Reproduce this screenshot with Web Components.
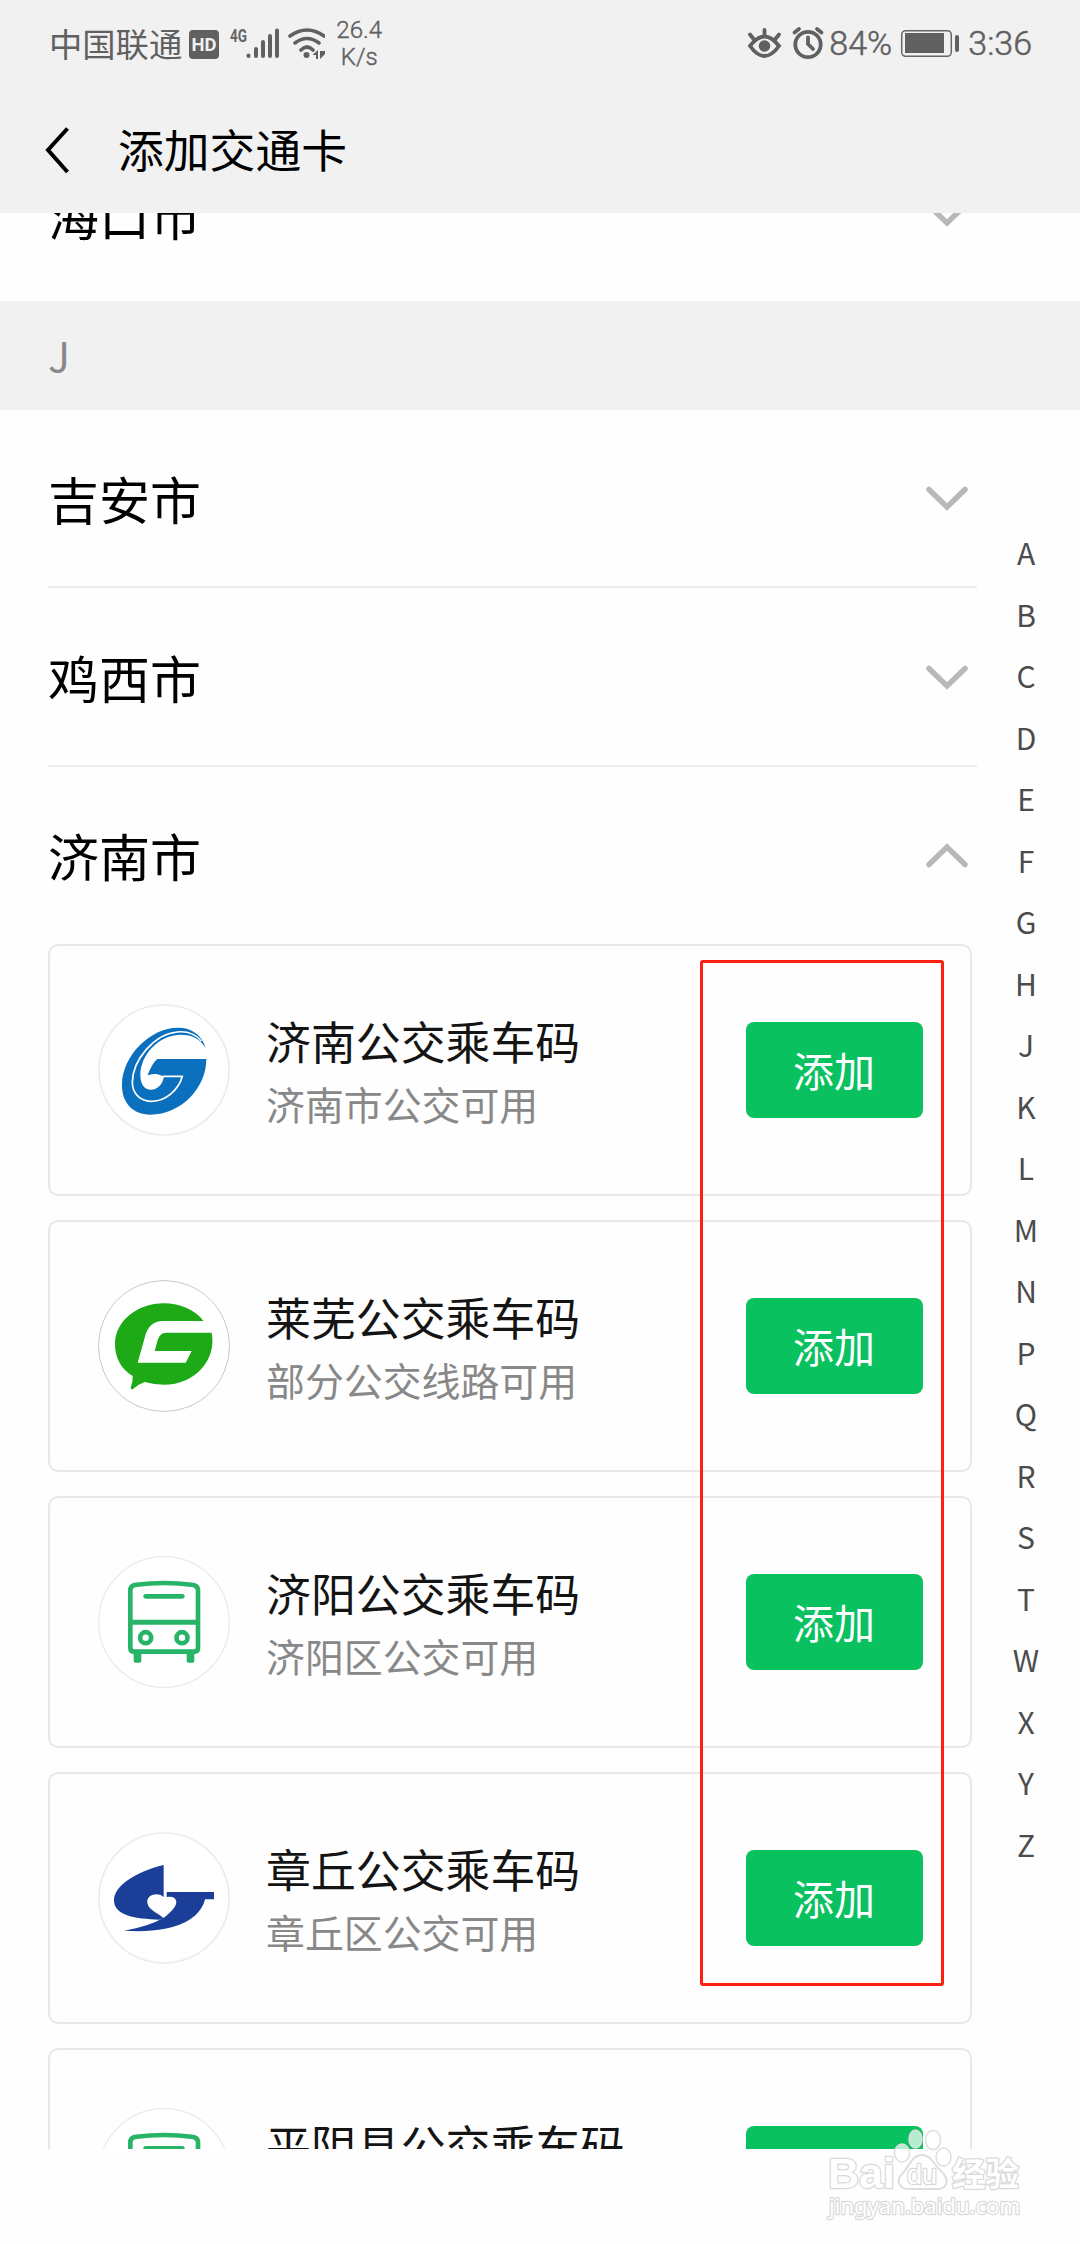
<!DOCTYPE html>
<html lang="zh-CN">
<head>
<meta charset="utf-8">
<title>添加交通卡</title>
<style>
html,body{margin:0;padding:0;background:#fefefe}
body{width:1080px;height:2244px;overflow:hidden;font-family:"Noto Sans CJK SC",sans-serif}
</style>
</head>
<body>
<transit-page></transit-page>
<script>
const define = (name, html) => customElements.define(name, class extends HTMLElement {
  connectedCallback() {
    if (this.shadowRoot) return;
    const t = document.createElement('template');
    t.innerHTML = typeof html === 'function' ? html(this) : html;
    this.attachShadow({mode: 'open'}).append(t.content.cloneNode(true));
  }
});

const BUS = `<svg viewBox="54 47 396 396"><circle cx="252" cy="245" r="196" fill="#fff" stroke="#ebebeb" stroke-width="4"/>
<g fill="none" stroke="#27b467" stroke-width="14"><path d="M151 322V150Q151 137 164 134Q252 122 340 134Q354 137 354 150V322Q354 334 342 334H163Q151 334 151 322Z"/><path d="M151 246H354" stroke-width="15"/><path d="M197 168H307" stroke-linecap="round"/><circle cx="197" cy="292" r="16.5"/><circle cx="306" cy="292" r="16.5"/></g>
<path fill="#27b467" d="M161 334H184V362Q184 367 178 367H167Q161 367 161 362ZM320 334H343V362Q343 367 337 367H326Q320 367 320 362Z"/></svg>`;
const LOGOS = {
  jinan: `<svg viewBox="54 40 396 396"><circle cx="252" cy="238" r="195" fill="#fff" stroke="#ececec" stroke-width="5"/>
<path fill="#0a6fbc" d="M377 171C365 133 335 111 294 111C210 111 127 196 126 281C125 339 160 372 211 372C303 372 379 292 379 205H232Q216 218 203 254Q225 243 252 256C249 281 232 297 213 297C193 297 181 280 181 253C181 193 236 132 303 132C337 132 359 145 377 171Z"/>
<path fill="#fff" d="M203 254Q222 238 240 254Z" opacity="0"/>
<path fill="#0a6fbc" d="M203 254L215 232H262V257H251Q225 243 203 254Z"/>
<path fill="none" stroke="#fff" stroke-width="5" d="M364 151C344 127 319 121 291 124C222 131 158 208 157 275C157 309 181 332 216 332C257 331 296 298 307 257H249"/>
</svg>`,
  laiwu: `<svg viewBox="54 60 396 396"><circle cx="252" cy="258" r="196.5" fill="#fff" stroke="#c9c6cf" stroke-width="3"/>
<path fill="#1eaa16" d="M371 183H250C219 183 205 200 197 223L173 308H317L335 273H224L232 244C237 227 244 218 260 218H395C411 300 344 374 252 374Q222 374 194 366Q176 372 158 388Q151 389 152 382Q159 366 158 348C123 328 105 292 105 252C105 184 171 130 252 130C301 130 345 150 371 183Z"/></svg>`,
  bus: BUS,
  zhangqiu: `<svg viewBox="54 65 396 396"><circle cx="252" cy="263" r="195" fill="#fff" stroke="#ececec" stroke-width="5"/>
<path fill="#1b3f98" d="M251 164V260Q243 252 231 252C213 252 200 262 202 278C205 298 232 307 250 323L237 328C167 326 102 316 102 270C102 226 168 184 251 164ZM260 245H402V267H375C361 329 280 371 132 361Q205 349 250 323C267 311 289 291 289 275Q288 257 260 260Z"/></svg>`
};

define('status-bar', `<style>
:host{display:flex;height:87px;box-sizing:border-box;padding:0 48px 0 49px;align-items:center;justify-content:space-between;color:#606060;font-family:Roboto,"Noto Sans CJK SC",sans-serif}
div{display:flex;align-items:center}
svg{display:block;flex:none}
.carrier{font:33.300px/40px "Noto Sans CJK SC",sans-serif;position:relative;top:-1px}
.speed{font-size:24px;font-weight:300;line-height:26.500px;text-align:center;width:46px;margin:0 0 0 11px;display:block;-webkit-text-stroke:.4px #606060}
.r{font-size:34px;font-weight:300;line-height:40px;-webkit-text-stroke:.5px #606060}
.r span{position:relative;top:-1px}
</style>
<div><span class="carrier">中国联通</span>
<svg width="143" height="40" viewBox="182 22 143 40" style="margin-top:-2px">
<rect x="189" y="29" width="30" height="29" rx="4" fill="#606060"/><text x="204" y="50" text-anchor="middle" font-family="Roboto" font-size="18" font-weight="700" fill="#f1f1f1" textLength="25" lengthAdjust="spacingAndGlyphs">HD</text>
<text x="230" y="41" font-family="Roboto" font-size="19" font-weight="700" fill="#666" textLength="17" lengthAdjust="spacingAndGlyphs">4G</text>
<g stroke="#606060" stroke-width="4" stroke-linecap="round"><path d="M248.500 54.500V55M256 48V55M263 41V55M270 35V55M277 29.500V55"/></g>
<g fill="none" stroke="#606060" stroke-width="3.600" stroke-linecap="round"><path d="M290 35Q307 23 324 35M295 42Q307 33 319 42M301 49Q307 43 313 49"/></g><circle cx="306.500" cy="54" r="3" fill="#606060"/><path fill="#606060" d="M312.500 54L318 49V58H316V54ZM320 50L325 50V53L320 58Z"/>
</svg><span class="speed">26.4 K/s</span></div>
<div class="r"><svg width="82" height="40" viewBox="746 22 82 40" style="margin-top:-2px"><g fill="none" stroke="#606060" stroke-width="3.800" stroke-linecap="round"><path d="M750 45Q764.500 26 779 45Q764.500 65 750 45Z"/><path d="M764.500 29V35M750 33.500L754 38.500M779 33.500L775 38.500"/><circle cx="808" cy="43.500" r="12.700"/><path d="M808 36.500V43L813 48M794.500 31.500L799 28M821.500 31.500L817 28"/></g><circle cx="764.500" cy="45" r="5.800" fill="#606060"/></svg>
<span style="width:63px;margin-left:1px">84%</span>
<svg width="62" height="40" viewBox="898 22 62 40" style="margin:-2px 0 0 6px"><rect x="901.700" y="29.700" width="49.600" height="25.600" rx="4" fill="none" stroke="#666" stroke-width="1.500"/><path fill="#606060" d="M905 32H944V52H905Z"/><rect x="955" y="34" width="4" height="17" rx="2" fill="#606060"/></svg>
<span style="margin-left:8px">3:36</span></div>`);

define('nav-bar', `<style>
:host{display:flex;height:126px;align-items:flex-start;padding-left:44px;color:#000}
svg{margin-top:39px}
h1{margin:28px 0 0 47px;font-size:45.800px;font-weight:400;line-height:66px}
</style><svg width="27" height="48" viewBox="0 0 27 48"><path d="M23.500 2.500L4 24L23.500 46" fill="none" stroke="#000" stroke-width="4"/></svg><h1><slot></slot></h1>`);

define('section-label', `<style>:host{display:block;height:109px;box-sizing:border-box;padding:0 48px;background:#f1f1f1;color:#888;font-size:41px;line-height:107px}</style><slot></slot>`);

define('city-row', el => `<style>
:host{display:flex;height:178px;box-sizing:border-box;margin:0 103px 0 48px;padding:2px 9px 0 0;align-items:center;justify-content:space-between;border-bottom:2px solid #ececec;color:#000;font-size:51px;line-height:76px}
:host([last]),:host([open]){border-bottom-color:transparent}
:host([last]){padding-top:8px}
span{position:relative;top:-1px}
</style><span><slot></slot></span><svg width="42" height="26" viewBox="0 0 42 26"><path d="${el.hasAttribute('open') ? 'M3 21.500L21 4L39 21.500' : 'M3 3.500L21 21L39 3.500'}" fill="none" stroke="#b8b8b8" stroke-width="5.500" stroke-linecap="round"/></svg>`);

define('add-button', `<style>:host{display:block;width:177px;height:96px;border-radius:8px;background:#09c15f;color:#fff;font-size:41px;line-height:94px;text-align:center;text-indent:-1px}</style><slot></slot>`);

define('card-item', el => `<style>
:host{display:flex;align-items:center;box-sizing:border-box;width:924px;height:252px;margin:0 0 24px 48px;padding:0 47px 0 48px;border:2px solid #e8e8e8;border-radius:10px;background:#fefefe}
.logo{width:132px;height:132px;flex:none}
.logo svg{display:block;width:132px;height:132px}
.t{flex:1;padding:0 0 1px 36px}
b{display:block;font-weight:400;font-size:44.900px;line-height:66px;color:#141414;white-space:nowrap}
i{display:block;font-style:normal;font-size:38.900px;line-height:58px;color:#888}
</style><div class="logo">${LOGOS[el.getAttribute('logo')]}</div><div class="t"><b><slot name="name"></slot></b><i><slot></slot></i></div><add-button>添加</add-button>`);

define('alpha-index', `<style>:host{display:flex;flex-direction:column;align-items:center;width:60px;color:#4c4c4c;font-size:30px}span{height:61.500px;line-height:61.500px}</style>` +
  [...'ABCDEFGHJKLMNPQRSTWXYZ'].map(c => `<span>${c}</span>`).join(''));

define('highlight-box', `<style>:host{display:block;box-sizing:border-box;border:3px solid #ff1f10;border-radius:3px}</style>`);

define('site-watermark', `<style>:host{display:block}svg{display:block}text{paint-order:stroke;stroke-linejoin:round}</style>
<svg width="210" height="100" viewBox="820 2125 210 100">
<g fill="#fff" fill-opacity=".7" stroke="#dedede" stroke-width="1.500"><ellipse cx="915.500" cy="2139" rx="6.500" ry="9"/><ellipse cx="933" cy="2140" rx="7.500" ry="9.500"/><ellipse cx="902" cy="2153" rx="7.500" ry="9"/><ellipse cx="943.500" cy="2157" rx="7.500" ry="9"/></g>
<path d="M922 2155C912 2155 909 2167 902 2174C895 2181 900 2190 910 2189H936C946 2190 950 2181 943 2173C935 2167 932 2155 922 2155Z" fill="#fff" stroke="#dedede" stroke-width="2"/>
<g fill="#fff" stroke="#d9d9d9" stroke-width="2.500">
<text x="828" y="2188" font-family="Liberation Sans" font-weight="700" font-size="43" textLength="67" lengthAdjust="spacingAndGlyphs">Bai</text>
<text x="907" y="2184" font-family="Liberation Sans" font-size="27" textLength="30" lengthAdjust="spacingAndGlyphs">du</text>
<text x="952" y="2186" font-family="Noto Sans CJK SC" font-weight="700" font-size="33.500">经验</text>
<text x="829" y="2214" font-family="Noto Sans" font-size="22.500" textLength="191" lengthAdjust="spacingAndGlyphs">jingyan.baidu.com</text></g></svg>`);

define('transit-page', `<style>
:host{display:block;position:relative;width:1080px;height:2244px;overflow:hidden;background:#fefefe}
header{background:#f1f1f1;height:213px}
main{height:1936px;overflow:hidden}
.list{margin-top:-90px}
alpha-index{position:absolute;left:996px;top:522px}
highlight-box{position:absolute;left:700px;top:960px;width:244px;height:1026px}
site-watermark{position:absolute;left:820px;top:2125px}
</style>
<header><status-bar></status-bar><nav-bar>添加交通卡</nav-bar></header>
<main><div class="list">
<city-row last>海口市</city-row>
<section-label>J</section-label>
<city-row>吉安市</city-row>
<city-row style="height:179px">鸡西市</city-row>
<city-row open style="height:177px">济南市</city-row>
<card-item logo="jinan"><span slot="name">济南公交乘车码</span>济南市公交可用</card-item>
<card-item logo="laiwu"><span slot="name">莱芜公交乘车码</span>部分公交线路可用</card-item>
<card-item logo="bus"><span slot="name">济阳公交乘车码</span>济阳区公交可用</card-item>
<card-item logo="zhangqiu"><span slot="name">章丘公交乘车码</span>章丘区公交可用</card-item>
<card-item logo="bus"><span slot="name">平阴县公交乘车码</span>平阴县公交可用</card-item>
</div></main>
<alpha-index></alpha-index>
<highlight-box></highlight-box>
<site-watermark></site-watermark>`);
</script>
</body>
</html>
